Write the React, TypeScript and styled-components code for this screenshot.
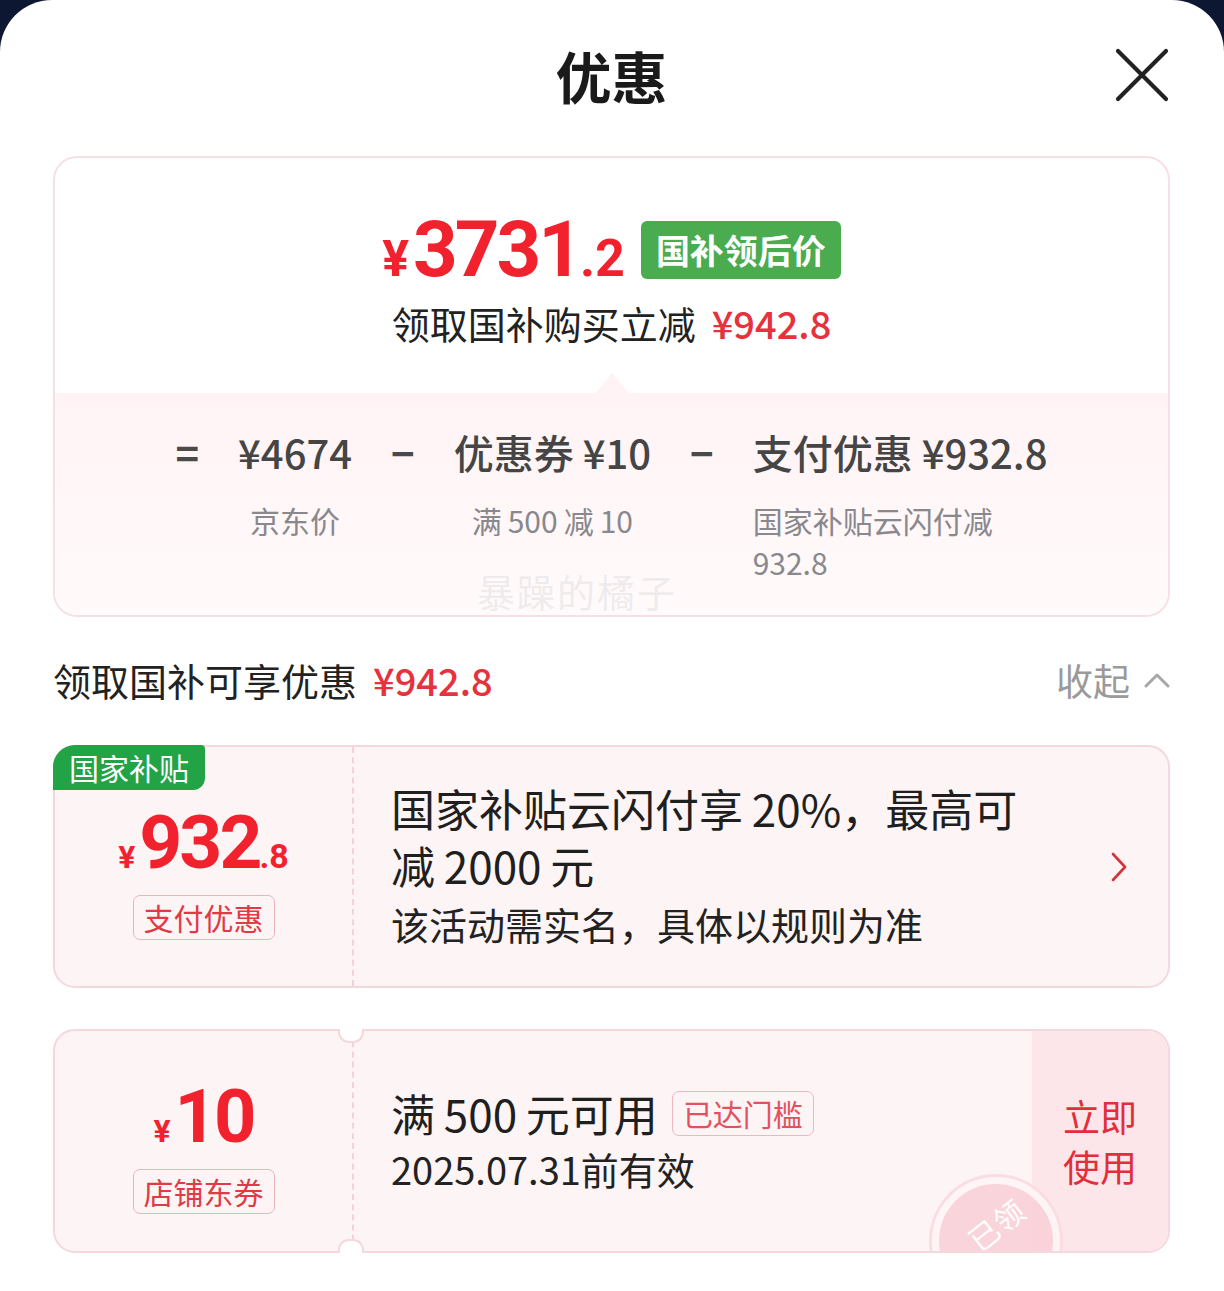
import React from "react";
import styled, { createGlobalStyle } from "styled-components";

const GlobalStyle = createGlobalStyle`
  html, body { margin: 0; padding: 0; background: #0d1731; }
  body {
    font-family: "Noto Sans CJK SC", "Noto Sans", sans-serif;
    color: #1c1c1c;
    -webkit-font-smoothing: antialiased;
  }
  * { box-sizing: border-box; }
`;

const NUM_FONT = `Roboto, "Noto Sans", sans-serif`;
const TS = "\u2009";

const Sheet = styled.div`
  background: #fff;
  border-radius: 52px 52px 0 0;
  min-height: 1291px;
  padding: 0 54px 40px 53px;
`;

const Header = styled.header`
  height: 156px;
  padding-bottom: 6px;
  display: grid;
  grid-template-columns: 1fr auto 1fr;
  align-items: center;
`;

const Title = styled.h1`
  grid-column: 2;
  margin: 0;
  font-size: 56px;
  line-height: 1;
  font-weight: 700;
  color: #1a1a1a;
`;

const CloseButton = styled.button`
  grid-column: 3;
  justify-self: end;
  width: 56px;
  height: 56px;
  padding: 0;
  border: none;
  background: none;
  display: flex;
`;

const SummaryCard = styled.section`
  position: relative;
  border: 2px solid #f6e0e4;
  border-radius: 24px;
  overflow: hidden;
`;

const SummaryTop = styled.div`
  height: 235px;
  padding-top: 53px;
  display: flex;
  flex-direction: column;
  align-items: center;
  gap: 10px;
`;

const PriceRow = styled.div`
  display: flex;
  align-items: center;
  gap: 16px;
`;

const BigPrice = styled.span`
  font-family: ${NUM_FONT};
  font-weight: 700;
  color: #f2212e;
  line-height: 1;
  font-size: 78px;
  letter-spacing: -3px;
  white-space: nowrap;
`;

const Yen = styled.span<{ $size: number }>`
  font-size: ${(p) => p.$size}px;
  letter-spacing: 0;
  margin-right: 4px;
`;

const Decimal = styled.span<{ $size: number }>`
  font-size: ${(p) => p.$size}px;
  letter-spacing: 0;
`;

const GreenBadge = styled.span`
  background: #4aab4f;
  color: #fff;
  font-size: 34px;
  font-weight: 700;
  line-height: 58px;
  height: 58px;
  padding: 0 15px;
  border-radius: 6px;
`;

const Subline = styled.div`
  font-size: 38px;
  line-height: 48px;
  color: #222;
  display: flex;
  gap: 16px;
`;

const RedAmount = styled.span<{ $size?: number }>`
  color: #e5323d;
  font-weight: 500;
  font-size: ${(p) => p.$size ?? 38}px;
`;

const SummaryBottom = styled.div`
  position: relative;
  background: linear-gradient(180deg, #fff3f5 0%, #fffafb 100%);
  height: 222px;
  padding-top: 35px;
  &::before {
    content: "";
    position: absolute;
    top: -20px;
    left: 50%;
    transform: translateX(-50%);
    border-left: 17px solid transparent;
    border-right: 17px solid transparent;
    border-bottom: 20px solid #fff3f5;
  }
`;

const Formula = styled.div`
  display: flex;
  justify-content: center;
  gap: 39px;
`;

const Op = styled.span`
  font-size: 40px;
  line-height: 48px;
  font-weight: 700;
  color: #4a4a4a;
`;

const Term = styled.div<{ $align: string }>`
  display: flex;
  flex-direction: column;
  align-items: ${(p) => p.$align};
  gap: 23px;
`;

const TermValue = styled.span`
  font-size: 40px;
  line-height: 48px;
  font-weight: 500;
  color: #454545;
  white-space: nowrap;
`;

const TermNote = styled.span`
  font-size: 30px;
  line-height: 42px;
  color: #88888d;
  max-width: 270px;
`;

const Watermark = styled.span`
  position: absolute;
  left: 422px;
  top: 412px;
  font-size: 38px;
  line-height: 42px;
  color: rgba(225, 220, 222, 0.55);
  text-shadow: 0 0 1px rgba(255, 255, 255, 0.8);
  letter-spacing: 2px;
  pointer-events: none;
`;

const SectionHeader = styled.div`
  height: 48px;
  margin: 39px 0 41px;
  display: flex;
  align-items: center;
  justify-content: space-between;
`;

const SectionTitle = styled.div`
  font-size: 38px;
  line-height: 48px;
  color: #222;
  display: flex;
  gap: 16px;
`;

const Collapse = styled.div`
  display: flex;
  align-items: center;
  gap: 14px;
  font-size: 37px;
  color: #9a9a9a;
`;

const CouponList = styled.div`
  display: flex;
  flex-direction: column;
  gap: 41px;
`;

const Coupon = styled.div<{ $h: number }>`
  position: relative;
  display: flex;
  height: ${(p) => p.$h}px;
  background: #fdf4f5;
  border: 2px solid #f4d8dd;
  border-radius: 22px;
`;

const CornerTag = styled.span`
  position: absolute;
  top: -2px;
  left: -2px;
  height: 45px;
  padding: 0 16px;
  background: #22a346;
  color: #fff;
  font-size: 30px;
  line-height: 45px;
  border-radius: 22px 4px 12px 0;
`;

const CouponLeft = styled.div<{ $notched?: boolean }>`
  position: relative;
  width: 299px;
  flex-shrink: 0;
  padding-top: 12px;
  border-right: 2px dashed #f3d3d9;
  display: flex;
  flex-direction: column;
  align-items: center;
  justify-content: center;
  gap: 15px;
  &::before,
  &::after {
    display: ${(p) => (p.$notched ? "block" : "none")};
    content: "";
    position: absolute;
    right: -12px;
    width: 22px;
    height: 12px;
    background: #fff;
    border: 2px solid #f4d8dd;
  }
  &::before {
    top: -2px;
    border-top: none;
    border-radius: 0 0 11px 11px;
  }
  &::after {
    bottom: -2px;
    border-bottom: none;
    border-radius: 11px 11px 0 0;
  }
`;

const CouponAmount = styled.span<{ $size: number }>`
  font-family: ${NUM_FONT};
  font-weight: 700;
  color: #f2212e;
  line-height: 1;
  font-size: ${(p) => p.$size}px;
  letter-spacing: -3px;
  white-space: nowrap;
`;

const OutlineTag = styled.span<{ $soft?: boolean }>`
  height: 45px;
  padding: 0 10px;
  border: 1.5px solid ${(p) => (p.$soft ? "#eeb6bf" : "#ebb4bc")};
  border-radius: 7px;
  color: ${(p) => (p.$soft ? "#e2525e" : "#e03a45")};
  font-size: 30px;
  line-height: 42px;
  white-space: nowrap;
`;

const CouponMain = styled.div`
  flex: 1;
  padding-left: 37px;
  display: flex;
  flex-direction: column;
  justify-content: center;
`;

const CouponHeadline = styled.div`
  font-size: 44px;
  line-height: 57px;
  color: #1f1f1f;
  max-width: 660px;
`;

const CouponSub = styled.div<{ $lh: number }>`
  font-size: 38px;
  line-height: ${(p) => p.$lh}px;
  color: #222;
`;

const ArrowCell = styled.div`
  display: flex;
  align-items: center;
  padding: 0 41px 0 20px;
`;

const CouponBody = styled.div`
  position: relative;
  flex: 1;
  display: flex;
  overflow: hidden;
  border-radius: 0 20px 20px 0;
`;

const HeadlineRow = styled.div`
  display: flex;
  align-items: center;
  gap: 14px;
  height: 55px;
  font-size: 44px;
  color: #1f1f1f;
`;

const ActionCell = styled.div`
  width: 136px;
  background: #fde6ea;
  display: flex;
  align-items: center;
  justify-content: center;
  text-align: center;
  color: #e02f3a;
  font-size: 37px;
  line-height: 50px;
`;

const Stamp = styled.div`
  position: absolute;
  left: 578px;
  top: 146px;
  width: 128px;
  height: 128px;
  border-radius: 50%;
  background: #f9d1d8;
  border: 7px solid #fff6f7;
  box-shadow: 0 0 0 3px #fadbe0;
  display: flex;
  align-items: flex-start;
  justify-content: center;
  padding-top: 18px;
  opacity: 0.9;
`;

const StampText = styled.span`
  color: #fff;
  font-size: 30px;
  transform: rotate(-38deg);
  letter-spacing: 1px;
`;

export default function App() {
  return (
    <>
      <GlobalStyle />
      <Sheet>
        <Header>
          <Title>优惠</Title>
          <CloseButton aria-label="关闭">
            <svg width="56" height="56" viewBox="0 0 56 56">
              <path d="M4 4 L52 52 M52 4 L4 52" stroke="#222" strokeWidth="4.2" strokeLinecap="round" />
            </svg>
          </CloseButton>
        </Header>

        <SummaryCard>
          <SummaryTop>
            <PriceRow>
              <BigPrice>
                <Yen $size={50}>¥</Yen>3731<Decimal $size={52}>.2</Decimal>
              </BigPrice>
              <GreenBadge>国补领后价</GreenBadge>
            </PriceRow>
            <Subline>
              领取国补购买立减<RedAmount>¥942.8</RedAmount>
            </Subline>
          </SummaryTop>
          <SummaryBottom>
            <Formula>
              <Op>=</Op>
              <Term $align="center">
                <TermValue>¥4674</TermValue>
                <TermNote>京东价</TermNote>
              </Term>
              <Op>−</Op>
              <Term $align="center">
                <TermValue>优惠券 ¥10</TermValue>
                <TermNote>{`满${TS}500${TS}减${TS}10`}</TermNote>
              </Term>
              <Op>−</Op>
              <Term $align="flex-start">
                <TermValue>支付优惠 ¥932.8</TermValue>
                <TermNote>国家补贴云闪付减932.8</TermNote>
              </Term>
            </Formula>
          </SummaryBottom>
          <Watermark>暴躁的橘子</Watermark>
        </SummaryCard>

        <SectionHeader>
          <SectionTitle>
            领取国补可享优惠<RedAmount>¥942.8</RedAmount>
          </SectionTitle>
          <Collapse>
            收起
            <svg width="26" height="16" viewBox="0 0 26 16">
              <path d="M2 14 L13 3 L24 14" fill="none" stroke="#a8a8a8" strokeWidth="3" strokeLinecap="round" strokeLinejoin="round" />
            </svg>
          </Collapse>
        </SectionHeader>

        <CouponList>
          <Coupon $h={243}>
            <CornerTag>国家补贴</CornerTag>
            <CouponLeft>
              <CouponAmount $size={75}>
                <Yen $size={32}>¥</Yen>932<Decimal $size={34}>.8</Decimal>
              </CouponAmount>
              <OutlineTag>支付优惠</OutlineTag>
            </CouponLeft>
            <CouponMain>
              <CouponHeadline>{`国家补贴云闪付享${TS}20%，最高可减${TS}2000${TS}元`}</CouponHeadline>
              <CouponSub $lh={60}>该活动需实名，具体以规则为准</CouponSub>
            </CouponMain>
            <ArrowCell>
              <svg width="16" height="30" viewBox="0 0 16 30">
                <path d="M2 2 L14 15 L2 28" fill="none" stroke="#d8313b" strokeWidth="2.6" strokeLinecap="round" strokeLinejoin="round" />
              </svg>
            </ArrowCell>
          </Coupon>

          <Coupon $h={224}>
            <CouponLeft $notched>
              <CouponAmount $size={74}>
                <Yen $size={32}>¥</Yen>10
              </CouponAmount>
              <OutlineTag>店铺东券</OutlineTag>
            </CouponLeft>
            <CouponBody>
              <CouponMain>
                <HeadlineRow>
                  {`满${TS}500${TS}元可用`}
                  <OutlineTag $soft>已达门槛</OutlineTag>
                </HeadlineRow>
                <CouponSub $lh={56}>2025.07.31前有效</CouponSub>
              </CouponMain>
              <ActionCell>
                立即
                <br />
                使用
              </ActionCell>
              <Stamp>
                <StampText>已领</StampText>
              </Stamp>
            </CouponBody>
          </Coupon>
        </CouponList>
      </Sheet>
    </>
  );
}
